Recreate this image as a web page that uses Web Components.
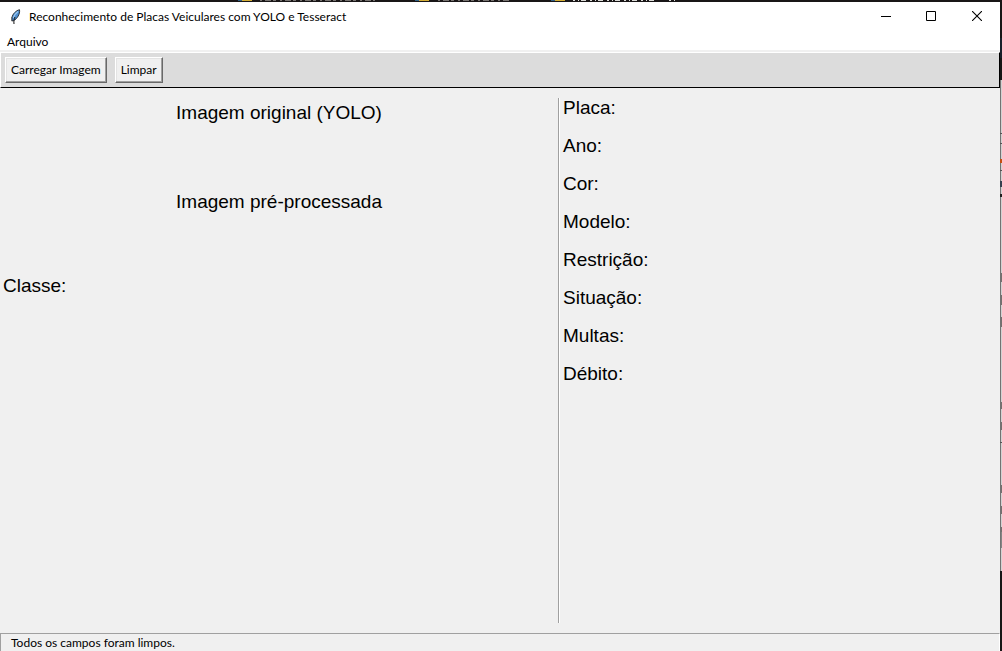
<!DOCTYPE html>
<html lang="pt-BR">
<head>
<meta charset="utf-8">
<title>Reconhecimento de Placas Veiculares com YOLO e Tesseract</title>
<style>
html, body { height: 100%; margin: 0; }
body { background: #161616; color: #000; font: 12px/16px Lato, "Noto Sans", sans-serif; overflow: hidden; }
</style>
</head>
<body>
<desk-top>
  <app-window>
    <title-bar slot="title">Reconhecimento de Placas Veiculares com YOLO e Tesseract</title-bar>
    <menu-bar slot="menu"></menu-bar>
    <tool-bar slot="tools">
      <tool-button>Carregar Imagem</tool-button>
      <tool-button>Limpar</tool-button>
    </tool-bar>
    <image-panel slot="left"></image-panel>
    <plate-details slot="right"></plate-details>
    <status-bar slot="status">Todos os campos foram limpos.</status-bar>
  </app-window>
</desk-top>
<script>
function define(name, html) {
  const template = document.createElement('template');
  template.innerHTML = html;
  customElements.define(name, class extends HTMLElement {
    constructor() {
      super();
      this.attachShadow({ mode: 'open' }).append(template.content.cloneNode(true));
    }
  });
}

define('desk-top', `
<style>
:host { display: grid; grid-template: 2px minmax(0, 1fr) / minmax(0, 1fr) 2px; height: 100vh; }
.above { grid-column: 1 / -1; display: block; width: 100%; height: 2px; }
.beside { display: block; width: 2px; height: 100%; }
</style>
<svg class="above" aria-hidden="true" shape-rendering="crispEdges">
  <rect width="100%" height="2" fill="#191617"/>
  <path d="M238 .5h4M415 .5h4M551 .5h4" stroke="#2f5f86"/>
  <path d="M242 .5h10M419 .5h10M555 .5h10" stroke="#d3ad36"/>
  <path d="M260 .5h115M438 .5h73" stroke="#777370" stroke-dasharray="2 3 6 2 3 4"/>
  <path d="M573 .5h84M669 .5h6" stroke="#dcdcd8" stroke-dasharray="2 3 1 2 5 4"/>
</svg>
<slot></slot>
<svg class="beside" aria-hidden="true" shape-rendering="crispEdges">
  <rect width="2" height="100%" fill="#161616"/>
  <rect y="36" width="2" height="20" fill="#17202a"/>
  <rect y="78" width="2" height="491" fill="#d2d2d2"/>
  <rect y="530" width="2" height="16" fill="#858585"/>
  <rect y="78" width="1" height="491" fill="#737373"/>
  <path d="M0 131.5h2M0 141.5h2M0 168.5h2M0 440.5h2" stroke="#555"/>
  <path d="M0 159h2" stroke="#c64f12" stroke-width="4"/>
  <path d="M0 182h2" stroke="#35414f" stroke-width="6" stroke-dasharray="2"/>
  <path d="M0 193.500h2" stroke="#202020" stroke-width="3"/>
  <path d="M1.500 271v9M1.500 293v10M1.500 315v10M1.500 400v7M1.500 420v8M1.500 483v8M1.500 504v8M1.500 525v5" stroke="#75706f"/>
</svg>`);

define('app-window', `
<style>
:host { display: flex; flex-direction: column; min-width: 0; background: #f0f0f0; }
main { flex: 1; display: grid; grid-template-columns: minmax(0, 558fr) 2px minmax(0, 440fr); padding: 10px 0; min-height: 0; }
.divider { background: linear-gradient(90deg, #a0a0a0 50%, #fff 50%); }
</style>
<slot name="title"></slot>
<slot name="menu"></slot>
<slot name="tools"></slot>
<main>
  <slot name="left"></slot>
  <div class="divider"></div>
  <slot name="right"></slot>
</main>
<slot name="status"></slot>`);

define('title-bar', `
<style>
:host { display: flex; align-items: center; height: 30px; background: #fff; }
.feather { margin: 0 8px 0 9px; }
.caption { flex: 1; white-space: nowrap; }
.controls { display: flex; align-self: flex-start; }
button { display: grid; place-items: center; width: 46px; height: 28px; padding: 0; border: 0; background: none; }
</style>
<svg class="feather" width="12" height="16" viewBox="0 0 12 16" aria-hidden="true">
  <path d="M10.500 .7C7 1.500 3.500 5 3 8.500L2.800 12l1.800-.4C8 10 11.300 5 10.500.7Z" fill="#4f8fd0" stroke="#111" stroke-width=".8"/>
  <path d="M9 2.500C7 4 5 6 4.300 9" stroke="#9cc8f0" stroke-width="1.200" fill="none"/>
  <path d="M6 8C5 10 4.700 12 5 15" stroke="#111" fill="none"/>
  <path d="M2.500 8v3.500" stroke="#777" fill="none"/>
</svg>
<span class="caption"><slot></slot></span>
<div class="controls">
  <button aria-label="Minimizar"><svg width="12" height="10"><path d="M2 5.500h10" stroke="#000"/></svg></button>
  <button aria-label="Maximizar"><svg width="10" height="10"><path d="M.5.5h9v9h-9z" fill="none" stroke="#000"/></svg></button>
  <button aria-label="Fechar"><svg width="10" height="10"><path d="M0 0l10 10M10 0L0 10" stroke="#000" stroke-width="1.100"/></svg></button>
</div>`);

define('menu-bar', `
<style>
:host { display: flex; height: 18px; padding: 0 0 0 7px; background: #fff; border-bottom: 2px solid #f0f0f0; }
button { padding: 1px 0 0; border: 0; background: none; font: inherit; color: inherit; }
</style>
<button aria-haspopup="menu">Arquivo</button>`);

define('tool-bar', `
<style>
:host { display: flex; gap: 8px; padding: 4px; background: #dcdcdc; border: 1px solid; border-color: #fff #000 #000 #fff; }
</style>
<slot></slot>`);

define('tool-button', `
<style>
:host { display: block; }
button { display: block; height: 26px; padding: 0 5px; font: inherit; color: inherit; background: #f0f0f0;
  border: 1px solid; border-color: #fff #696969 #696969 #fff; box-shadow: inset -1px -1px #a0a0a0, inset 1px 1px #e3e3e3; }
</style>
<button><slot></slot></button>`);

define('image-panel', `
<style>
:host { display: block; font: 19px/22px "Liberation Sans", Arial, sans-serif; }
h2 { margin: 0; padding: 4px 0 63px; font: inherit; text-align: center; }
p { margin: 0; padding: 0 3px; }
.second { padding-bottom: 62px; }
</style>
<h2>Imagem original (YOLO)</h2>
<h2 class="second">Imagem pré-processada</h2>
<p>Classe:</p>`);

define('plate-details', `
<style>
:host { display: block; font: 19px/20px "Liberation Sans", Arial, sans-serif; }
dl { display: grid; gap: 18px; margin: 0; padding: 0 3px; }
</style>
<dl>
  <dt>Placa:</dt>
  <dt>Ano:</dt>
  <dt>Cor:</dt>
  <dt>Modelo:</dt>
  <dt>Restrição:</dt>
  <dt>Situação:</dt>
  <dt>Multas:</dt>
  <dt>Débito:</dt>
</dl>`);

define('status-bar', `
<style>
:host { display: block; height: 16px; padding: 1px 10px 0; border: 1px solid; border-color: #a0a0a0 #fff #f0f0f0 #a0a0a0; border-bottom: 0; }
</style>
<span role="status"><slot></slot></span>`);
</script>
</body>
</html>
